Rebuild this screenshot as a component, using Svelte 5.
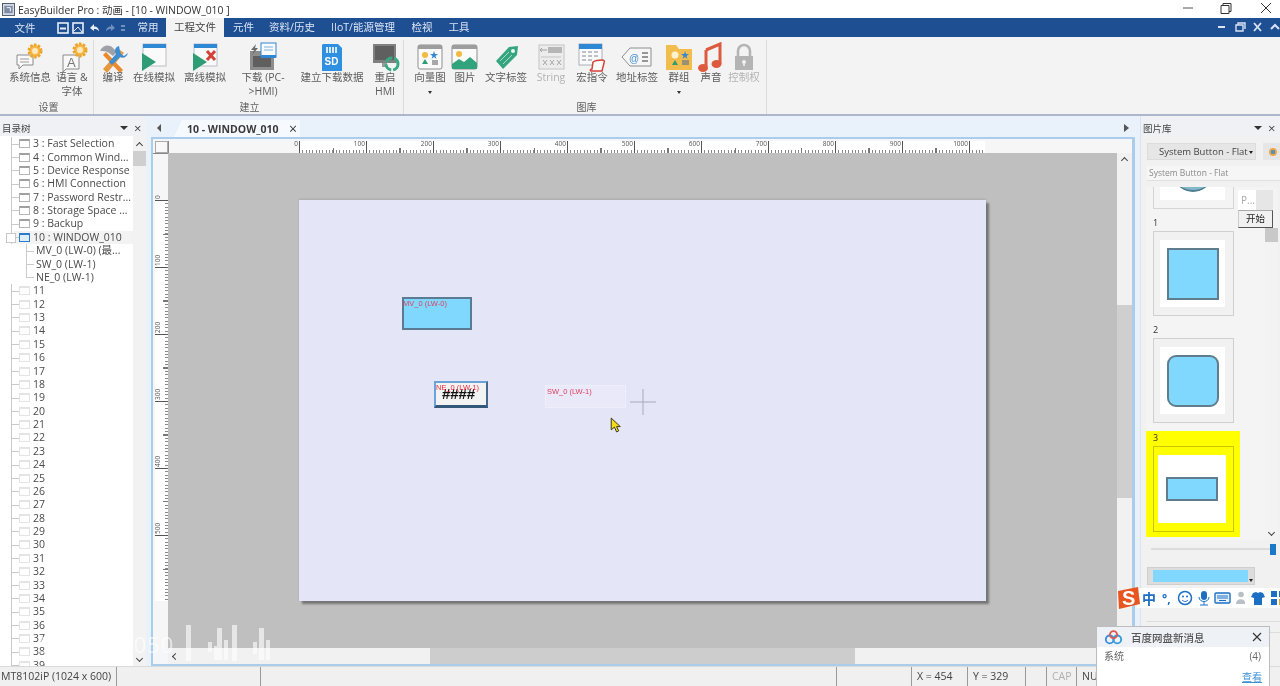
<script>
  const menus = [
    { t: '常用', w: 36 }, { t: '工程文件', w: 58, on: true }, { t: '元件', w: 39 },
    { t: '资料/历史', w: 58 }, { t: 'IIoT/能源管理', w: 84 }, { t: '检视', w: 34 }, { t: '工具', w: 40 }
  ];
  const groups = [
    { name: '设置', cls: 'g1', items: [
      { w: 44, i: 'sys', l: ['系统信息'] }, { w: 40, i: 'lang', l: ['语言 &', '字体'] } ] },
    { name: '建立', cls: 'g2', items: [
      { w: 34, i: 'build', l: ['编译'] }, { w: 48, i: 'online', l: ['在线模拟'] }, { w: 54, i: 'offline', l: ['离线模拟'] },
      { w: 62, i: 'down', l: ['下载 (PC-', '>HMI)'] }, { w: 76, i: 'sd', l: ['建立下载数据'] }, { w: 30, i: 'restart', l: ['重启', 'HMI'] } ] },
    { name: '图库', cls: 'g3', items: [
      { w: 46, i: 'vector', l: ['向量图'], more: true }, { w: 24, i: 'pic', l: ['图片'] }, { w: 58, i: 'tag', l: ['文字标签'] },
      { w: 32, i: 'string', l: ['String'], off: true }, { w: 50, i: 'macro', l: ['宏指令'] }, { w: 40, i: 'addr', l: ['地址标签'] },
      { w: 44, i: 'group', l: ['群组'], more: true }, { w: 20, i: 'sound', l: ['声音'] }, { w: 46, i: 'lock', l: ['控制权'], off: true } ] }
  ];
  const named = ['3 : Fast Selection', '4 : Common Wind...', '5 : Device Response', '6 : HMI Connection', '7 : Password Restr...', '8 : Storage Space ...', '9 : Backup'];
  const kids = ['MV_0 (LW-0) (最...', 'SW_0 (LW-1)', 'NE_0 (LW-1)'];
  const empties = Array.from({ length: 29 }, (_, k) => k + 11);
  const hLabels = Array.from({ length: 11 }, (_, k) => k * 100);
  const vLabels = Array.from({ length: 6 }, (_, k) => k * 100);
  const statusCells = [
    { w: 117, t: 'MT8102iP (1024 x 600)' }, { w: 144, t: '' }, { w: 576, t: '' }, { w: 75, t: '' },
    { w: 56, t: 'X = 454' }, { w: 58, t: 'Y = 329' }, { w: 21, t: '' }, { w: 30, t: 'CAP', off: true }, { w: 40, t: 'NUM' }
  ];
  const wm = [[186,625,5,36],[208,642,4,10],[214,646,4,14],[217,628,5,32],[224,640,4,20],[232,625,5,36],[253,642,4,12],[259,628,5,32],[266,640,4,20]];
</script>

{#snippet icon(n)}
  <svg class="ico" viewBox="0 0 32 32" aria-hidden="true">
    {#if n === 'sys'}
      <path d="M3 13h16v10H9l-4 4v-4H3z" fill="#fafafa" stroke="#8a8a8a"/>
      <path d="M6 17h9M6 20h9" stroke="#9a9a9a"/>
      <circle cx="21" cy="9" r="6" fill="#f6b94c" stroke="#eda42b" stroke-width="3" stroke-dasharray="2.4 1.4"/>
      <circle cx="21" cy="9" r="3" fill="#fde9bd"/>
    {:else if n === 'lang'}
      <path d="M7 13h16v14H10l-3 3z" fill="#f8f8f8" stroke="#8a8a8a"/>
      <text x="11" y="25" class="ia">A</text>
      <circle cx="24" cy="8" r="6" fill="#f6b94c" stroke="#eda42b" stroke-width="3" stroke-dasharray="2.4 1.4"/>
      <circle cx="24" cy="8" r="3" fill="#fde9bd"/>
    {:else if n === 'build'}
      <path d="M6 27l17-19 4 3-17 20z" fill="#e8983c"/>
      <path d="M3 9c3-6 9-7 13-3l4 4-4 4-4-3c-3-2-6-2-9-2z" fill="#9ea2a8"/>
      <path d="M9 10l17 18-3 3L6 13z" fill="#e98a2c"/>
      <path d="M22 4c-4 1-5 5-3 8l-7 8 3 3 8-8c3 2 7 0 8-4l-4 3-3-2-1-3z" fill="#3d8ed0"/>
    {:else if n === 'online'}
      <rect x="5" y="2" width="23" height="22" fill="#fafafa" stroke="#b8c0c8"/>
      <rect x="5" y="2" width="23" height="4" fill="#2f88d4"/>
      <path d="M4 11l14 9-14 9z" fill="#2e9c74"/>
    {:else if n === 'offline'}
      <rect x="5" y="2" width="23" height="22" fill="#fafafa" stroke="#b8c0c8"/>
      <rect x="5" y="2" width="23" height="4" fill="#2f88d4"/>
      <path d="M4 11l14 9-14 9z" fill="#2e9c74"/>
      <path d="M18 9l8 9M26 9l-8 9" stroke="#d4433a" stroke-width="3"/>
    {:else if n === 'down'}
      <rect x="3" y="9" width="24" height="19" fill="#8d8d8d"/>
      <rect x="6" y="14" width="18" height="11" fill="#5f5f5f"/>
      <path d="M9 2L4 8h3L5 13l6-7H8z" fill="#6a6a6a"/>
      <rect x="14" y="1" width="15" height="14" fill="#fafafa" stroke="#2f88d4"/>
      <path d="M17 5h9M17 8h9" stroke="#7ab2e0"/>
      <rect x="14" y="13" width="15" height="3" fill="#2f88d4"/>
    {:else if n === 'sd'}
      <path d="M7 2h15l4 4v23H6V3z" fill="#2f8fe0"/>
      <path d="M11 5v6M14 5v6M17 5v6M20 5v6" stroke="#fff" stroke-width="1.6"/>
      <text x="8.5" y="23" class="isd">SD</text>
    {:else if n === 'restart'}
      <rect x="4" y="2" width="23" height="19" fill="#808080"/>
      <rect x="6" y="4" width="19" height="14" fill="#5f5f5f"/>
      <rect x="13" y="21" width="5" height="4" fill="#9a9a9a"/>
      <circle cx="23" cy="22" r="6" fill="none" stroke="#3aa882" stroke-width="3" stroke-dasharray="8 2"/>
    {:else if n === 'vector'}
      <rect x="4" y="3" width="24" height="24" rx="2" fill="#fafafa" stroke="#8f8f8f"/>
      <rect x="4" y="3" width="24" height="4" fill="#9d9d9d"/>
      <circle cx="11" cy="13" r="3" fill="#f4b93f"/>
      <path d="M20 9l1 3h3l-2.500 2 1 3-2.500-2-2.500 2 1-3-2.500-2h3z" fill="#3688d0"/>
      <path d="M11 17l3 5H8z" fill="#2e9c74"/>
      <rect x="18" y="18" width="6" height="5" fill="#a8a8a8"/>
    {:else if n === 'pic'}
      <rect x="3" y="3" width="25" height="24" rx="2" fill="#fafafa" stroke="#8f8f8f"/>
      <rect x="3" y="3" width="25" height="4" fill="#9d9d9d"/>
      <circle cx="10" cy="12" r="3" fill="#f4b93f"/>
      <path d="M3 27v-5l7-5 5 3 6-5 7 6v6z" fill="#31a37d"/>
    {:else if n === 'tag'}
      <path d="M6 19L19 5l9-1-1 9-14 14z" fill="#35a57f"/>
      <circle cx="23" cy="9" r="2" fill="#e8f7f1"/>
      <path d="M10 19l9-9M13 22l9-9" stroke="#a9dcc9"/>
    {:else if n === 'string'}
      <rect x="4" y="3" width="25" height="24" fill="#ececec" stroke="#c4c4c4"/>
      <rect x="13" y="5" width="14" height="6" fill="#b6b6b6"/>
      <path d="M6 8h6M7 6l-2 2 2 2" stroke="#a0a0a0" fill="none"/>
      <path d="M6 15h20" stroke="#c4c4c4"/>
      <path d="M8 18l4 5M12 18l-4 5M15 18l4 5M19 18l-4 5M22 18l4 5M26 18l-4 5" stroke="#a8a8a8"/>
    {:else if n === 'macro'}
      <rect x="3" y="2" width="23" height="21" fill="#fafafa" stroke="#aab0b8"/>
      <rect x="3" y="2" width="23" height="5" fill="#2f88d4"/>
      <path d="M6 10h4M12 10h4M18 10h4M6 14h4M12 14h4M18 14h4M6 18h4M12 18h4" stroke="#7f8a96"/>
      <path d="M17 20c3-2 6-2 9-2 2 0 3 1 2 3l-2 8H15c-1 0-1-2 1-2z" fill="#fafafa" stroke="#d4433a" stroke-width="1.500"/>
    {:else if n === 'addr'}
      <path d="M9 6h21v18H9L1 15z" fill="#f6f6f6" stroke="#8e8e8e"/>
      <text x="8" y="20" class="iat">@</text>
      <path d="M21 11h6M21 15h6M21 19h6" stroke="#777" stroke-width="1.500"/>
    {:else if n === 'group'}
      <path d="M3 3h10l3 4h13v21H3z" fill="#f3bd4e"/>
      <circle cx="12" cy="13" r="3.500" fill="#fff3cf"/>
      <path d="M22 9l1 3h3l-2.500 2 1 3-2.500-2-2.500 2 1-3-2.500-2h3z" fill="#3688d0"/>
      <path d="M12 18l3 5H9z" fill="#2e9c74"/>
      <rect x="19" y="18" width="7" height="5" fill="#9a9072"/>
    {:else if n === 'sound'}
      <path d="M11 8l14-6v20" fill="none" stroke="#dd5a3e" stroke-width="3"/>
      <path d="M11 8v17" stroke="#dd5a3e" stroke-width="3"/>
      <ellipse cx="8" cy="26" rx="5" ry="4" fill="#dd5a3e"/>
      <ellipse cx="21.500" cy="22" rx="5" ry="4" fill="#dd5a3e"/>
    {:else if n === 'lock'}
      <path d="M10 15V9a6 6 0 0 1 12 0v6" fill="none" stroke="#b4b4b4" stroke-width="2.600"/>
      <rect x="7" y="14" width="18" height="14" fill="#b4b4b4"/>
      <circle cx="16" cy="20" r="2" fill="#f0f0f0"/>
      <path d="M16 20v4" stroke="#f0f0f0" stroke-width="1.600"/>
    {/if}
  </svg>
{/snippet}

<div class="app">
  <header class="title">
    <svg class="appicon" viewBox="0 0 14 14"><rect x=".5" y=".5" width="13" height="13" fill="#d4dbe8" stroke="#4a5568"/><rect x="2.500" y="3" width="9" height="8" fill="#7d8ba3"/><path d="M5 5h4v4" stroke="#fff" fill="none"/></svg>
    <span class="apptitle">EasyBuilder Pro : 动画 - [10 - WINDOW_010 ]</span>
    <div class="winctl">
      <svg viewBox="0 0 120 18" class="winsvg"><path d="M3 8h10" stroke="#555"/><path d="M41 5.500h8v8h-8zM43 5.500v-2h8v8h-2" fill="none" stroke="#333"/><path d="M81 3l10 10M91 3L81 13" stroke="#333"/></svg>
    </div>
  </header>

  <nav class="menu">
    <span class="file">文件</span>
    <svg class="qat" viewBox="0 0 84 12">
      <rect x="1" y="1" width="10" height="10" fill="none" stroke="#e8eef8" stroke-width="1.600"/><rect x="3" y="5.500" width="6" height="2" fill="#e8eef8"/>
      <rect x="16" y="1" width="10" height="10" fill="#1f4f93" stroke="#e8eef8" stroke-width="1.600"/><path d="M17 9l4-4 4 5" stroke="#e8eef8" fill="none"/>
      <path d="M33 6l4-4v2.500c3 0 5 2 5 5-1-2-3-2.500-5-2.500V9z" fill="#e8eef8"/>
      <path d="M58 6l-4-4v2.500c-3 0-5 2-5 5 1-2 3-2.500 5-2.500V9z" fill="#6f8fbe"/>
      <path d="M64 4h4M64 8h4" stroke="#c5d3e8"/>
    </svg>
    {#each menus as m}
      <span class="mitem" class:on={m.on} style:width="{m.w}px">{m.t}</span>
    {/each}
    <svg class="mctl" viewBox="0 0 62 12">
      <path d="M0 6h7" stroke="#d8e3f3" stroke-width="2"/>
      <path d="M18 4h7v6h-7zM20 4V2h7v6" fill="none" stroke="#d8e3f3" stroke-width="1.400"/>
      <path d="M36 2l7 8M43 2l-7 8" stroke="#d8e3f3" stroke-width="1.800"/>
      <path d="M53 8l4-4 4 4" fill="none" stroke="#d8e3f3" stroke-width="2"/>
    </svg>
  </nav>

  <section class="ribbon">
    {#each groups as g}
      <div class="rgroup {g.cls}">
        <div class="ritems">
          {#each g.items as it}
            <div class="ritem" class:off={it.off} style:width="{it.w}px">
              {@render icon(it.i)}
              {#each it.l as line}<span class="rlabel">{line}</span>{/each}
              {#if it.more}<i class="caret"></i>{/if}
            </div>
          {/each}
        </div>
        <div class="gname">{g.name}</div>
      </div>
    {/each}
  </section>

  <main class="main">
    <aside class="left">
      <div class="phead"><span>目录树</span><i class="pcaret"></i><b class="px">×</b></div>
      <div class="treewrap">
        <div class="tree">
          {#each named as n}
            <div class="row"><i class="win"></i><span>{n}</span></div>
          {/each}
          <div class="row sel"><i class="exp"></i><i class="win blue"></i><span>10 : WINDOW_010</span></div>
          {#each kids as k, idx}
            <div class="row kid" class:last={idx === 2}><span>{k}</span></div>
          {/each}
          {#each empties as e}
            <div class="row"><i class="win pale"></i><span>{e}</span></div>
          {/each}
        </div>
        <div class="vbar">
          <i class="chev up"></i><i class="thumb"></i><i class="spacer"></i><i class="chev dn"></i>
        </div>
      </div>
    </aside>

    <section class="center">
      <div class="tabs">
        <i class="tri l"></i>
        <div class="tab"><span>10 - WINDOW_010</span><b>×</b></div>
        <i class="fill"></i>
        <i class="tri r"></i>
      </div>
      <div class="doc">
        <div class="rtop">
          <div class="corner"><i></i></div>
          <div class="rstrip">
            <div class="rscale">
              {#each hLabels as v, k}
                <span class="hnum" style:left="{k * 67 - 18}px">{v}</span>
              {/each}
            </div>
          </div>
        </div>
        <div class="docbody">
          <div class="rleft">
            <div class="vscale">
              {#each vLabels as v, k}
                <span class="vnum" style:top="{k * 67 - 16}px">{v}</span>
              {/each}
            </div>
          </div>
          <div class="canvas">
            <div class="window">
              <div class="w mv"><span class="tagred">MV_0 (LW-0)</span></div>
              <div class="w ne"><span class="hash">####</span><span class="tagred">NE_0 (LW-1)</span></div>
              <div class="w sw"><span class="tagred">SW_0 (LW-1)</span></div>
              <svg class="cross" viewBox="0 0 28 28"><path d="M14 1v26M1 14h26" stroke="#a9a9b6"/></svg>
              <svg class="cursor" viewBox="0 0 10 15"><path d="M1 1v11l3-2.500 2 4.500 2-1-2-4h3.500z" fill="#f4dc1c" stroke="#33331a" stroke-width=".9"/></svg>
            </div>
          </div>
          <div class="dvbar">
            <i class="chev up"></i><i class="dspace1"></i><i class="dthumb"></i><i class="spacer"></i>
          </div>
        </div>
        <div class="hbar"><i class="chev lf"></i><i class="hthumb"></i></div>
      </div>
    </section>

    <aside class="right">
      <div class="phead"><span>图片库</span><i class="pcaret"></i><b class="px">×</b></div>
      <div class="rbody">
        <div class="combo"><span>System Button - Flat</span><i class="caret dark"></i><em class="gear"></em></div>
        <div class="field">System Button - Flat</div>
        <div class="list">
          <div class="items">
            <div class="partial"><div class="pinner"><i></i></div></div>
            <div class="item"><label>1</label><div class="frame"><div class="inner"><i class="shape s1"></i></div></div></div>
            <div class="item"><label>2</label><div class="frame"><div class="inner"><i class="shape s2"></i></div></div></div>
            <div class="item sel"><label>3</label><div class="frame"><div class="inner"><i class="shape s3"></i></div></div></div>
          </div>
          <div class="lbar"><i class="lthumb"></i><i class="spacer"></i><i class="chev dn"></i></div>
        </div>
        <div class="slider"><i class="sthumb"></i></div>
        <div class="colorbox"><i></i><em class="caret dark"></em></div>
        <div class="rlines"></div>
      </div>
    </aside>
  </main>

  <footer class="status">
    {#each statusCells as c}
      <span class="cell" class:off={c.off} style:width="{c.w}px">{c.t}</span>
    {/each}
  </footer>

  <div class="tips"><div class="tip1"><span>P...</span><i></i></div><div class="tip2">开始</div></div>

  <div class="ime">
    <svg class="sogou" viewBox="0 0 26 24"><path d="M3 5l20-4 2 17-21 5z" fill="#e8551e"/><text x="7" y="19" class="sg">S</text></svg>
    <span class="imech">中</span>
    <span class="imep">°,</span>
    <svg class="imeicons" viewBox="0 0 112 16">
      <g transform="translate(1 0)"><circle cx="8" cy="8" r="6.500" fill="none" stroke="#1d6fc4" stroke-width="1.500"/><circle cx="6" cy="6.500" r="1" fill="#1d6fc4"/><circle cx="10" cy="6.500" r="1" fill="#1d6fc4"/><path d="M5 10c2 2 4 2 6 0" stroke="#1d6fc4" fill="none"/></g>
      <rect x="25" y="1" width="6" height="9" rx="3" fill="#1d6fc4"/><path d="M23 7c0 6 10 6 10 0M28 12v3M24 15h8" stroke="#1d6fc4" fill="none"/>
      <g transform="translate(-3 0)"><rect x="42" y="3" width="15" height="10" rx="1" fill="#e8f1fb" stroke="#1d6fc4" stroke-width="1.400"/><path d="M44 6h11M44 8h11M46 10.500h7" stroke="#1d6fc4"/></g>
      <g transform="translate(-2 0)"><circle cx="67" cy="4.500" r="2.800" fill="#b8c0c8"/><path d="M62 14c0-6 8-6 9-2v2z" fill="#b8c0c8"/></g>
      <g transform="translate(-4 0)"><path d="M81 3l3-1 2 1 2-1 3 1 2 4-3 1v7h-8V8l-3-1z" fill="#1d6fc4"/>
      <rect x="99" y="1" width="6" height="6" fill="#1d6fc4"/><rect x="107" y="1" width="5" height="6" fill="#1d6fc4"/><rect x="99" y="9" width="6" height="6" fill="#1d6fc4"/><rect x="107" y="9" width="5" height="6" fill="#e8a020"/></g>
    </svg>
  </div>

  <div class="notice">
    <div class="nhead">
      <svg class="cloud" viewBox="0 0 20 16"><circle cx="6" cy="10" r="4.200" fill="none" stroke="#3a8de0" stroke-width="2"/><circle cx="14" cy="10" r="4.200" fill="none" stroke="#2f9ed8" stroke-width="2"/><circle cx="10" cy="5" r="3.800" fill="none" stroke="#e0574f" stroke-width="2"/></svg>
      <span>百度网盘新消息</span>
      <svg class="nx" viewBox="0 0 10 10"><path d="M1 1l8 8M9 1l-8 8" stroke="#333" stroke-width="1.100"/></svg>
    </div>
    <div class="nrow"><span>系统</span><span>(4)</span></div>
    <a class="nlink" href="#top">查看</a>
  </div>

  <div class="wmark"><span>15761150050</span>
    <svg viewBox="0 0 280 70">
      {#each wm as b}<rect x={b[0]} y={b[1] - 620} width={b[2]} height={b[3]} fill="#fff"/>{/each}
    </svg>
  </div>
</div>

<style>
  :global(body) { margin: 0; background: #f0f0f0; }
  .app {
    position: relative; width: 1280px; height: 686px; overflow: hidden; display: flex; flex-direction: column;
    font-family: "Open Sans", "Noto Sans CJK SC", sans-serif; font-size: 10.5px; color: #444; filter: blur(.35px); background: #f0f0f0;
  }
  .title { height: 18px; flex: none; background: #fff; display: flex; align-items: center; color: #333; font-size: 10.4px; }
  .appicon { width: 13px; height: 13px; margin-left: 2px; margin-right: 3px; }
  .winctl { margin-left: auto; }
  .winsvg { display: block; width: 120px; height: 18px; margin-right: -20px; }
  .menu { height: 19px; flex: none; background: #1f4f93; display: flex; align-items: center; color: #dbe5f4; font-size: 10.5px; position: relative; }
  .file { width: 50px; text-align: center; }
  .qat { width: 84px; height: 12px; margin-left: 7px; flex: none; }
  .mitem { height: 19px; line-height: 19px; text-align: center; flex: none; }
  .menu .qat + .mitem { margin-left: -11px; }
  .mitem.on { background: #f3f3f3; color: #444; }
  .mctl { width: 62px; height: 12px; position: absolute; right: 0; top: 3px; }

  .ribbon { height: 79px; flex: none; background: #f3f3f3; display: flex; padding-left: 8px; box-sizing: border-box; border-bottom: 2px solid #aeb6cb; }
  .rgroup { display: flex; flex-direction: column; border-right: 1px solid #dcdcdc; margin: 3px 0 0; }
  .g1 { width: 85px; }
  .g1 .gname { padding-right: 4px; }
  .g2 { padding-left: 2px; width: 307px; }
  .g3 { padding-left: 3px; width: 359px; }
  .ritems { display: flex; height: 60px; }
  .ritem { display: flex; flex-direction: column; align-items: center; flex: none; color: #5c5c5c; position: relative; }
  .ritem.off { color: #b2b2b2; }
  .ico { width: 32px; height: 32px; flex: none; margin-top: 2px; margin-bottom: -4px; }
  .rlabel { white-space: nowrap; line-height: 14px; font-size: 10.5px; }
  .caret { width: 0; height: 0; border: 2.5px solid transparent; border-top: 3px solid #333; margin-top: 7px; }
  .gname { text-align: center; font-size: 10px; color: #5c5c5c; line-height: 12px; margin-top: 1px; }
  .ia { font: 13px "Liberation Sans", sans-serif; fill: #777; }
  .isd { font: bold 10px "Liberation Sans", sans-serif; fill: #fff; }
  .iat { font: 10px "Liberation Sans", sans-serif; fill: #4a90d0; }
  .sg { font: 900 20px "Liberation Sans", sans-serif; fill: #fff; }

  .main { flex: 1; min-height: 0; display: flex; }
  .left { width: 146px; flex: none; display: flex; flex-direction: column; background: #fff; }
  .phead { height: 20px; flex: none; display: flex; align-items: center; padding: 3px 0 0 2px; box-sizing: border-box; background: #eff1f5; font-size: 9.5px; color: #444; }
  .pcaret { margin-left: auto; width: 0; height: 0; border: 4px solid transparent; border-top: 4px solid #333; margin-top: 4px; }
  .px { font-weight: 400; font-size: 13px; color: #444; margin: 0 2px 0 6px; width: 10px; }
  .treewrap { flex: 1; min-height: 0; display: flex; }
  .tree { flex: 1; min-width: 0; overflow: hidden; padding-top: 1px; }
  .row { height: 13.39px; display: flex; align-items: center; position: relative; padding-left: 19px; white-space: nowrap; font-size: 10.5px; line-height: 13px; color: #4a4a4a; }
  .row::before { content: ""; position: absolute; left: 11px; top: 0; bottom: 0; width: 1px; background: #cacaca; }
  .row::after { content: ""; position: absolute; left: 11px; top: 6.500px; width: 8px; height: 1px; background: #cacaca; }
  .row.sel { background: linear-gradient(90deg, #fff 14px, #f3f3f3 14px); }
  .row.kid { padding-left: 36px; }
  .row.kid::before { left: 26px; }
  .row.kid::after { left: 26px; width: 8px; }
  .row.kid.last::before { bottom: 6.500px; }
  .win { width: 9px; height: 6px; border: 1px solid #b5b5b5; border-top: 2px solid #a0a0a0; margin-right: 3px; flex: none; background: #fff; position: relative; z-index: 1; }
  .win.blue { border-color: #2c7ccb; background: #dfeefb; }
  .win.pale { border-color: #e4e4e4; }
  .exp { position: absolute; left: 6px; top: 2px; width: 8px; height: 8px; border: 1px solid #c8c8c8; background: #fff; z-index: 1; }
  .vbar { width: 13px; flex: none; display: flex; flex-direction: column; align-items: center; background: #f2f2f2; }
  .chev { width: 5px; height: 5px; flex: none; border: solid #444; border-width: 1.300px 0 0 1.300px; box-sizing: border-box; }
  .chev.up { transform: rotate(45deg); margin-top: 7px; }
  .chev.dn { transform: rotate(225deg); margin-bottom: 5px; }
  .chev.lf { transform: rotate(-45deg); margin-left: 5px; }
  .thumb { width: 13px; height: 15px; background: #cfcfcf; margin-top: 3px; flex: none; }
  .spacer { flex: 1; }

  .center { flex: 1; min-width: 0; display: flex; flex-direction: column; background: #e9f1fb; padding: 0 5px 0 5px; }
  .tabs { height: 21px; flex: none; display: flex; align-items: flex-end; position: relative; }
  .tri { width: 0; height: 0; border: 4px solid transparent; margin-bottom: 5px; flex: none; }
  .tri.l { border-right: 4px solid #555; margin-left: 2px; }
  .tri.r { border-left: 5px solid #555; margin-right: 2px; }
  .tab { width: 126px; margin-left: 13px; height: 17px; background: #f6f9fd; display: flex; align-items: center; justify-content: space-between; padding: 0 3px 0 13px; box-sizing: border-box; clip-path: polygon(8px 0, 100% 0, 100% 100%, 0 100%); font-weight: 700; color: #3a3a3a; font-size: 10.5px; }
  .tab b { font-weight: 400; font-size: 14px; line-height: 12px; }
  .fill { flex: 1; }
  .doc { flex: 1; min-height: 0; border: 2px solid #a9cdea; border-right-width: 3px; display: flex; flex-direction: column; background: #f4f6f9; }
  .rtop { height: 14px; flex: none; display: flex; padding-top: 2px; box-sizing: border-box; }
  .corner { width: 15px; flex: none; padding-left: 2px; box-sizing: border-box; }
  .corner i { display: block; width: 11px; height: 10px; border: 1px solid #aaa; background: #f8f8f8; }
  .rstrip { flex: 1; position: relative; background: #f6f6f6; border-left: 1px solid #888; }
  .rscale { position: absolute; left: 130px; top: 0; bottom: 0; width: 686px; background:
      repeating-linear-gradient(90deg, #555 0 1px, transparent 1px 67px) 0 0 / 100% 100% no-repeat,
      repeating-linear-gradient(90deg, #777 0 1px, transparent 1px 33.500px) 0 100% / 100% 5px no-repeat,
      repeating-linear-gradient(90deg, #888 0 1px, transparent 1px 3.350px) 0 100% / 100% 3px no-repeat,
      #fff; }
  .hnum { position: absolute; top: -1px; width: 17px; text-align: right; font-size: 6.500px; line-height: 8px; color: #555; }
  .docbody { flex: 1; min-height: 0; display: flex; }
  .rleft { width: 15px; flex: none; position: relative; background: #f6f6f6; border-top: 1px solid #888; box-sizing: border-box; }
  .vscale { position: absolute; left: 2px; right: 0; top: 46px; height: 401px; background:
      repeating-linear-gradient(180deg, #555 0 1px, transparent 1px 67px) 0 0 / 100% 100% no-repeat,
      repeating-linear-gradient(180deg, #777 0 1px, transparent 1px 33.500px) 100% 0 / 5px 100% no-repeat,
      repeating-linear-gradient(180deg, #888 0 1px, transparent 1px 3.350px) 100% 0 / 3px 100% no-repeat,
      #fff; }
  .vnum { position: absolute; left: -1px; height: 15px; line-height: 8px; writing-mode: vertical-rl; transform: rotate(180deg); font-size: 6.500px; color: #555; text-align: left; }
  .canvas { flex: 1; min-width: 0; position: relative; background: #bfbfbf; overflow: hidden; }
  .window { position: absolute; left: 131px; top: 47px; width: 687px; height: 401px; background: #e5e5f8; box-shadow: 3px 3px 2px #757575, 0 -1px 2px #a8a8a8; }
  .w { position: absolute; box-sizing: border-box; }
  .tagred { position: absolute; left: -1px; top: 0; font-family: "Liberation Sans", sans-serif; font-size: 7.500px; line-height: 9px; color: #e0405c; white-space: nowrap; }
  .mv { left: 103px; top: 97px; width: 70px; height: 33px; background: #80d8ff; border: 2px solid #5b7a93; }
  .ne { left: 135px; top: 181px; width: 54px; height: 27px; background: #f3f3f3; border: 2px solid; border-color: #6ba3d6 #46688c #34587c #6ba3d6; border-bottom-width: 3px; }
  .ne .tagred { left: 0; top: 0; color: #f0283c; }
  .hash { position: absolute; left: 6px; top: 3px; font: 700 15px/16px "Liberation Sans", sans-serif; color: #111; letter-spacing: -.1px; }
  .sw { left: 246px; top: 185px; width: 81px; height: 23px; background: #e9e9f9; border: 1px dotted #f3f3fb; }
  .sw .tagred { left: 1px; top: 1px; }
  .cross { position: absolute; left: 330px; top: 188px; width: 28px; height: 28px; }
  .cursor { position: absolute; left: 311px; top: 217px; width: 11px; height: 16px; }
  .dvbar { width: 15px; flex: none; display: flex; flex-direction: column; align-items: center; background: #f1f1f1; }
  .dvbar .chev.up { margin-top: 5px; }
  .dspace1 { height: 142px; flex: none; }
  .dthumb { width: 15px; height: 193px; background: #cfcfcf; flex: none; }
  .hbar { height: 16px; flex: none; background: #f1f1f1; display: flex; align-items: center; position: relative; margin-left: 15px; }
  .hthumb { width: 425px; height: 16px; background: #cdcdcd; margin-left: 252px; }

  .right { width: 140px; flex: none; display: flex; flex-direction: column; background: #f1f1f1; border-left: 1px solid #d9e4f1; box-sizing: border-box; }
  .rbody { flex: 1; min-height: 0; padding: 7px 0 0 6px; display: flex; flex-direction: column; }
  .combo { height: 17px; flex: none; width: 109px; box-sizing: border-box; display: flex; align-items: center; background: #e6e6e6; border: 1px solid #dcdcdc; padding-left: 11px; font-size: 9.500px; color: #444; position: relative; white-space: nowrap; }
  .combo .caret { margin: 4px 2px 0 auto; }
  .caret.dark { display: block; border-top-color: #222; }
  .gear { position: absolute; left: 115px; top: -1px; width: 18px; height: 17px; background: radial-gradient(circle at 10px 9px, #5b8ec0 0 2px, #e8a840 2.500px 3.500px, #e6e6e6 4.500px); font-style: normal; }
  .field { height: 15px; flex: none; margin-top: 6px; font-size: 8.500px; line-height: 14px; color: #8a8a8a; padding-left: 2px; background: #f6f6f6; border-bottom: 1px solid #e0e0e0; box-sizing: border-box; }
  .list { height: 353px; flex: none; margin: 6px 0 0 -1px; display: flex; position: relative; overflow: hidden; }
  .items { width: 119px; flex: none; background: #f4f4f4; }
  .partial { width: 81px; height: 22px; margin-left: 7px; box-sizing: border-box; border: 1px solid #d5d5d5; border-top: 0; padding: 0 8px 0 6px; }
  .pinner { height: 13px; background: #fff; overflow: hidden; display: flex; justify-content: center; }
  .pinner i { width: 36px; height: 30px; border-radius: 50%; background: #7fb9ca; margin-top: -25px; flex: none; border-bottom: 2px solid #4f7c8e; box-sizing: border-box; }
  .item { width: 94px; box-sizing: border-box; padding: 0 7px; margin-top: 7px; }
  .item label { display: block; height: 15px; line-height: 14px; font-size: 9px; color: #333; }
  .frame { width: 81px; height: 85px; box-sizing: border-box; border: 1px solid #d0d0d0; padding: 8px 8px 8px 6px; background: #f1f1f1; }
  .inner { height: 100%; background: #fff; display: flex; align-items: center; justify-content: center; }
  .shape { display: block; background: #80d8ff; border: 2px solid #5f7d8c; box-sizing: border-box; width: 52px; height: 52px; }
  .s2 { border-radius: 9px; }
  .s3 { height: 24px; }
  .item.sel { background: #ffff00; height: 106px; margin-top: 8px; }
  .item.sel .frame { background: #ffff00; border-color: #c8c800; height: 86px; padding: 8px 7px 8px 4px; }
  .lbar { width: 13px; flex: none; display: flex; flex-direction: column; align-items: center; background: #f3f3f3; }
  .lthumb { width: 13px; height: 14px; background: #c8c8c8; margin-top: 41px; flex: none; }
  .slider { height: 2px; flex: none; background: #dcdcdc; width: 120px; margin: 8px 0 0 4px; position: relative; }
  .sthumb { position: absolute; left: 119px; top: -4px; width: 6px; height: 11px; background: #1b78c8; }
  .colorbox { height: 18px; width: 108px; flex: none; margin: 17px 0 0 0; box-sizing: border-box; background: #dcdcdc; border: 1px solid #cfcfcf; padding: 2px 5px; position: relative; }
  .colorbox i { display: block; height: 12px; width: 95px; background: #80d8ff; }
  .colorbox em { position: absolute; right: 1px; bottom: 0; margin: 0; }
  .rlines { margin-top: 36px; border-top: 1px solid #dcdcdc; border-bottom: 1px solid #dcdcdc; height: 10px; }

  .status { height: 20px; flex: none; display: flex; background: #f0f0f0; border-top: 1px solid #dadada; box-sizing: border-box; font-size: 10.5px; color: #444; }
  .cell { flex: none; box-sizing: border-box; border-right: 1px solid #9a9a9a; line-height: 19px; padding-left: 1px; white-space: nowrap; overflow: hidden; }
  .cell:nth-child(n+5) { padding-left: 5px; }
  .cell.off { color: #b0b0b0; }

  .tips { position: absolute; left: 1238px; top: 190px; width: 35px; }
  .tip1 { height: 20px; background: #fff; display: flex; font-size: 10px; color: #aaa; line-height: 20px; padding-left: 3px; box-sizing: border-box; }
  .tip1 i { margin-left: auto; width: 17px; background: #e6e6e6; }
  .tip2 { height: 18px; background: #f1f1f1; border: 1px solid #555; border-top-color: #aaa; border-left-color: #ccc; box-sizing: border-box; text-align: center; font-size: 9.500px; line-height: 16px; color: #222; }

  .ime { position: absolute; left: 1115px; top: 586px; width: 165px; height: 24px; display: flex; align-items: center; background: linear-gradient(90deg, transparent 22px, #fff 22px) 0 2px / 100% 20px no-repeat; }
  .sogou { width: 26px; height: 24px; flex: none; }
  .imech { color: #1d6fc4; font-size: 14px; font-weight: 700; margin-left: 1px; width: 20px; }
  .imep { color: #1d6fc4; font-size: 12px; font-weight: 700; width: 14px; margin-left: 6px; }
  .imeicons { width: 112px; height: 16px; flex: none; margin-left: 5px; }

  .notice { position: absolute; left: 1096px; top: 626px; width: 174px; height: 62px; background: #fff; border: 1px solid #bdbdbd; box-sizing: border-box; color: #555; }
  .nhead { height: 20px; background: #eef1f6; display: flex; align-items: center; padding-left: 7px; font-size: 10.5px; color: #555; font-weight: 500; }
  .cloud { width: 19px; height: 15px; margin-right: 8px; }
  .nx { width: 10px; height: 10px; margin-left: auto; margin-right: 7px; }
  .nrow { display: flex; justify-content: space-between; padding: 2px 8px 0 7px; font-size: 10px; line-height: 15px; color: #666; }
  .nlink { position: absolute; right: 7px; top: 43px; font-size: 10px; line-height: 14px; color: #3c8fd8; }

  .wmark { position: absolute; left: 0; top: 620px; width: 280px; height: 70px; opacity: .62; color: #fff; pointer-events: none; }
  .wmark span { position: absolute; left: 25px; top: 11px; font-size: 22px; line-height: 26px; letter-spacing: 1px; }
  .wmark svg { position: absolute; left: 0; top: 0; width: 280px; height: 70px; }
</style>
